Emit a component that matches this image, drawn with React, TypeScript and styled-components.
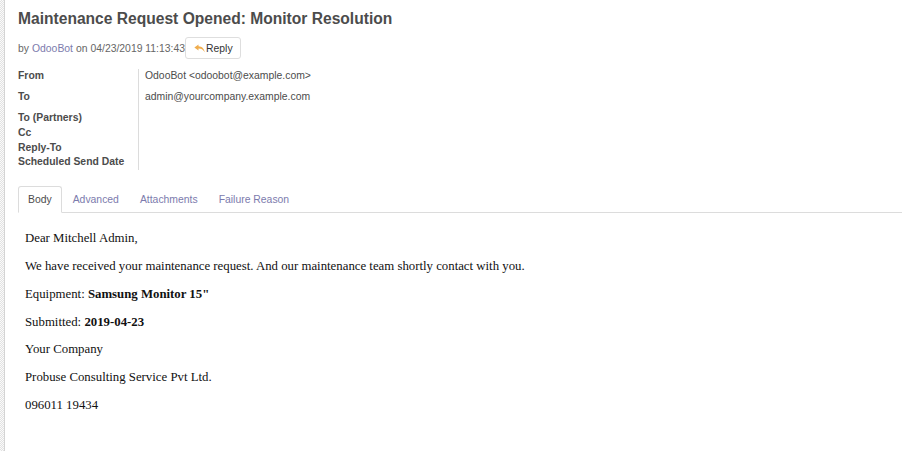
import React from "react";
import styled, { createGlobalStyle } from "styled-components";

const GlobalStyle = createGlobalStyle`
  html, body { margin: 0; padding: 0; background: #fff; }
  body { font-family: "Liberation Sans", Arial, sans-serif; }
`;

const Frame = styled.div`
  display: flex;
  min-height: 451px;
  height: 100vh;
  overflow: hidden;
`;

const Edge = styled.div`
  width: 4px;
  flex: none;
  background-color: #fff;
  background-image: repeating-conic-gradient(#e2e2e2 0 25%, #fafafa 0 50%);
  background-size: 2px 2px;
  border-right: 1px solid #d4d4d4;
`;

const Sheet = styled.div`
  flex: 1;
  padding: 9px 13px 0 13px;
  color: #4c4c4c;
`;

const Title = styled.h1`
  margin: 0;
  font-size: 15.6px;
  line-height: 19px;
  font-weight: bold;
  color: #4c4c4c;
`;

const Meta = styled.div`
  display: flex;
  align-items: center;
  margin-top: 9px;
  height: 22px;
  font-size: 10.4px;
  color: #666;
`;

const Author = styled.a`
  color: #7c7bad;
  text-decoration: none;
  margin: 0 3px;
`;

const ReplyButton = styled.button`
  display: inline-flex;
  align-items: center;
  gap: 1px;
  height: 22px;
  margin-left: 0;
  padding: 0 7px 0 8px;
  background: #fff;
  border: 1px solid #dedede;
  border-radius: 3px;
  font-family: "Liberation Sans", Arial, sans-serif;
  font-size: 10.4px;
  color: #333;
`;

const Fields = styled.div`
  display: grid;
  grid-template-columns: 121px 1fr;
  margin-top: 10px;
  font-size: 10.4px;
  line-height: 14.8px;
`;

const Label = styled.div<{ $tall?: boolean }>`
  font-weight: bold;
  color: #4c4c4c;
  border-right: 1px solid #dcdcdc;
  padding-bottom: ${(p) => (p.$tall ? "6.2px" : "0")};
`;

const Value = styled.div<{ $tall?: boolean }>`
  padding-left: 6px;
  color: #4c4c4c;
  padding-bottom: ${(p) => (p.$tall ? "6.2px" : "0")};
`;

const TabBar = styled.div`
  display: flex;
  margin-top: 16px;
  height: 26px;
  border-bottom: 1px solid #dcdcdc;
  font-size: 10.4px;
`;

const Tab = styled.div<{ $active?: boolean }>`
  display: flex;
  align-items: center;
  padding: 0 9px;
  margin: 0 1px -1px 0;
  border: 1px solid ${(p) => (p.$active ? "#dcdcdc" : "transparent")};
  border-bottom-color: ${(p) => (p.$active ? "#fff" : "transparent")};
  border-radius: 3px 3px 0 0;
  background: ${(p) => (p.$active ? "#fff" : "transparent")};
  color: ${(p) => (p.$active ? "#4c4c4c" : "#7c7bad")};
`;

const Body = styled.div`
  padding: 18px 7px 0 7px;
  font-family: "Liberation Serif", "Times New Roman", serif;
  font-size: 12.8px;
  line-height: 15px;
  color: #111;
`;

const Para = styled.p`
  margin: 0 0 12.8px 0;
`;

const ReplyIcon = () => (
  <svg width="11" height="9" viewBox="0 0 16 13" aria-hidden="true">
    <path
      d="M6.5 0.5 L0.5 5 L6.5 9.5 V6.6 C10.5 6.6 13.2 7.8 15.5 12 C15 7 11.8 3.6 6.5 3.3 Z"
      fill="#f0ad4e"
    />
  </svg>
);

const fieldRows: { label: string; value: string; tall?: boolean }[] = [
  { label: "From", value: "OdooBot <odoobot@example.com>", tall: true },
  { label: "To", value: "admin@yourcompany.example.com", tall: true },
  { label: "To (Partners)", value: "" },
  { label: "Cc", value: "" },
  { label: "Reply-To", value: "" },
  { label: "Scheduled Send Date", value: "" },
];

const tabs = ["Body", "Advanced", "Attachments", "Failure Reason"];

export default function App() {
  return (
    <>
      <GlobalStyle />
      <Frame>
        <Edge />
        <Sheet>
          <Title>Maintenance Request Opened: Monitor Resolution</Title>
          <Meta>
            by<Author href="#">OdooBot</Author>on 04/23/2019 11:13:43
            <ReplyButton>
              <ReplyIcon />
              Reply
            </ReplyButton>
          </Meta>
          <Fields>
            {fieldRows.map((r) => (
              <React.Fragment key={r.label}>
                <Label $tall={r.tall}>{r.label}</Label>
                <Value $tall={r.tall}>{r.value}</Value>
              </React.Fragment>
            ))}
          </Fields>
          <TabBar>
            {tabs.map((t, i) => (
              <Tab key={t} $active={i === 0}>
                {t}
              </Tab>
            ))}
          </TabBar>
          <Body>
            <Para>Dear Mitchell Admin,</Para>
            <Para>
              We have received your maintenance request. And our maintenance team shortly contact with you.
            </Para>
            <Para>
              Equipment: <b>Samsung Monitor 15"</b>
            </Para>
            <Para>
              Submitted: <b>2019-04-23</b>
            </Para>
            <Para>Your Company</Para>
            <Para>Probuse Consulting Service Pvt Ltd.</Para>
            <Para>096011 19434</Para>
          </Body>
        </Sheet>
      </Frame>
    </>
  );
}
